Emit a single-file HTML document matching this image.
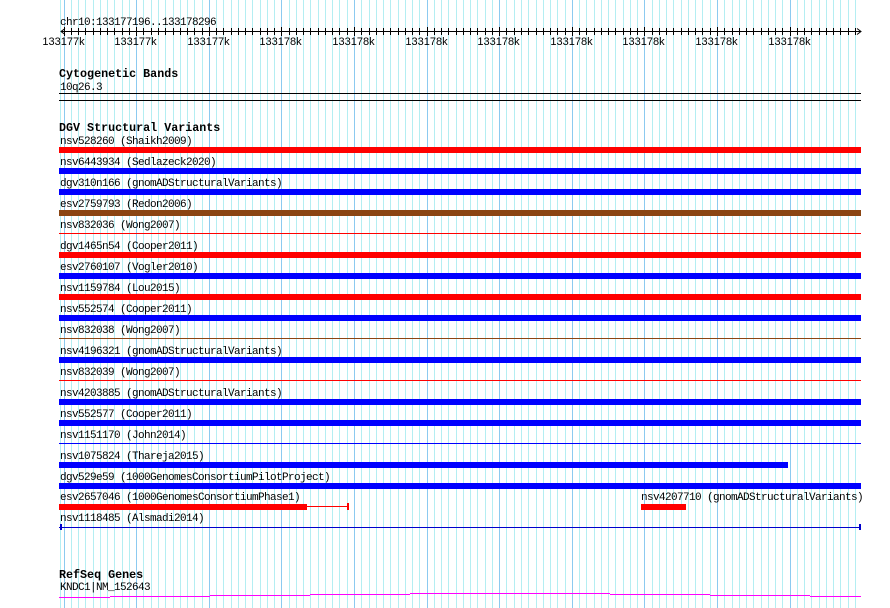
<!DOCTYPE html>
<html><head><meta charset="utf-8"><style>
html,body{margin:0;padding:0;background:#fff;}
svg{display:block}
.t{font-family:"Liberation Mono",monospace;font-size:11px;letter-spacing:-0.6px;fill:#000}
.h{font-family:"Liberation Mono",monospace;font-size:11.7px;font-weight:bold;fill:#000}
.r{font-family:"Liberation Sans",sans-serif;font-size:11px;fill:#000}
</style></head><body>
<svg id="s" width="890" height="608" xmlns="http://www.w3.org/2000/svg" shape-rendering="crispEdges">
<g id="grid"></g>
<text class="t" x="60" y="25">chr10:133177196..133178296</text>
<line x1="61" y1="31.5" x2="861" y2="31.5" stroke="#000"/>
<path d="M65 28.5 L61 31.5 L65 34.5 M857 28.5 L861 31.5 L857 34.5" stroke="#000" fill="none" shape-rendering="auto"/>
<g id="ticks"></g>
<g id="labels"></g>
<text class="h" x="59" y="77">Cytogenetic Bands</text>
<text class="t" x="60" y="90">10q26.3</text>
<line x1="59" y1="93.5" x2="861" y2="93.5" stroke="#000"/>
<line x1="59" y1="100.5" x2="861" y2="100.5" stroke="#000"/>
<text class="h" x="59" y="131">DGV Structural Variants</text>
<g id="rows"></g>
<text class="h" x="59" y="578">RefSeq Genes</text>
<text class="t" x="60" y="590">KNDC1|NM_152643</text>
<path d="M59 597.5H110M110 596.5H210M210 595.5H310M310 594.5H410M410 593.5H610M610 594.5H710M710 595.5H810M810 596.5H861" stroke="#f0f" fill="none"/>
</svg>
<script>
var NS="http://www.w3.org/2000/svg";
function el(p,n,a){var e=document.createElementNS(NS,n);for(var k in a)e.setAttribute(k,a[k]);p.appendChild(e);return e;}
var g=document.getElementById('grid'),tk=document.getElementById('ticks'),lb=document.getElementById('labels');
el(g,'line',{x1:60.5,y1:0,x2:60.5,y2:608,stroke:'#b4eef2'});
var labs=['133177k','133177k','133177k','133178k','133178k','133178k','133178k','133178k','133178k','133178k','133178k'];
for(var i=0;i<=109;i++){var x=Math.round(64.6+7.26*i)-0.5;var maj=i%10==0;
 el(g,'line',{x1:x,y1:0,x2:x,y2:608,stroke:maj?'#8ccaf0':'#b4eef2'});
 el(tk,'line',{x1:x,y1:maj?27:28,x2:x,y2:maj?36:35,stroke:'#000'});
 if(maj){var t=el(lb,'text',{class:'r',x:x-1,y:45,'text-anchor':'middle'});t.textContent=labs[i/10];}
}
var rows=[
['nsv528260 (Shaikh2009)','#f00',1],['nsv6443934 (Sedlazeck2020)','#00f',1],['dgv310n166 (gnomADStructuralVariants)','#00f',1],
['esv2759793 (Redon2006)','#8b4513',1],['nsv832036 (Wong2007)','#f00',0],['dgv1465n54 (Cooper2011)','#f00',1],
['esv2760107 (Vogler2010)','#00f',1],['nsv1159784 (Lou2015)','#f00',1],['nsv552574 (Cooper2011)','#00f',1],
['nsv832038 (Wong2007)','#8b4513',0],['nsv4196321 (gnomADStructuralVariants)','#00f',1],['nsv832039 (Wong2007)','#f00',0],
['nsv4203885 (gnomADStructuralVariants)','#00f',1],['nsv552577 (Cooper2011)','#00f',1],['nsv1151170 (John2014)','#00f',0],
['nsv1075824 (Thareja2015)','#00f',2],['dgv529e59 (1000GenomesConsortiumPilotProject)','#00f',1]];
var R=document.getElementById('rows');
rows.forEach(function(r,i){var y=140+21*i;
 var t=el(R,'text',{class:'t',x:60,y:y+4});t.textContent=r[0];
 if(r[2]==1)el(R,'rect',{x:59,y:y+7,width:802,height:6,fill:r[1]});
 else if(r[2]==2)el(R,'rect',{x:59,y:y+7,width:729,height:6,fill:r[1]});
 else el(R,'line',{x1:59,y1:y+9.5,x2:861,y2:y+9.5,stroke:r[1]});
});
var t=el(R,'text',{class:'t',x:60,y:500});t.textContent='esv2657046 (1000GenomesConsortiumPhase1)';
el(R,'rect',{x:59,y:504,width:248,height:6,fill:'#f00'});
el(R,'line',{x1:307,y1:506.5,x2:348,y2:506.5,stroke:'#f00'});
el(R,'rect',{x:347,y:503,width:2,height:7,fill:'#f00'});
t=el(R,'text',{class:'t',x:641,y:500});t.textContent='nsv4207710 (gnomADStructuralVariants)';
el(R,'rect',{x:641,y:504,width:45,height:6,fill:'#f00'});
t=el(R,'text',{class:'t',x:60,y:521});t.textContent='nsv1118485 (Alsmadi2014)';
el(R,'line',{x1:59,y1:527.5,x2:861,y2:527.5,stroke:'#00c'});
el(R,'rect',{x:60,y:524,width:2,height:6,fill:'#00c'});
el(R,'rect',{x:859,y:524,width:2,height:6,fill:'#00c'});
</script>
</body></html>
